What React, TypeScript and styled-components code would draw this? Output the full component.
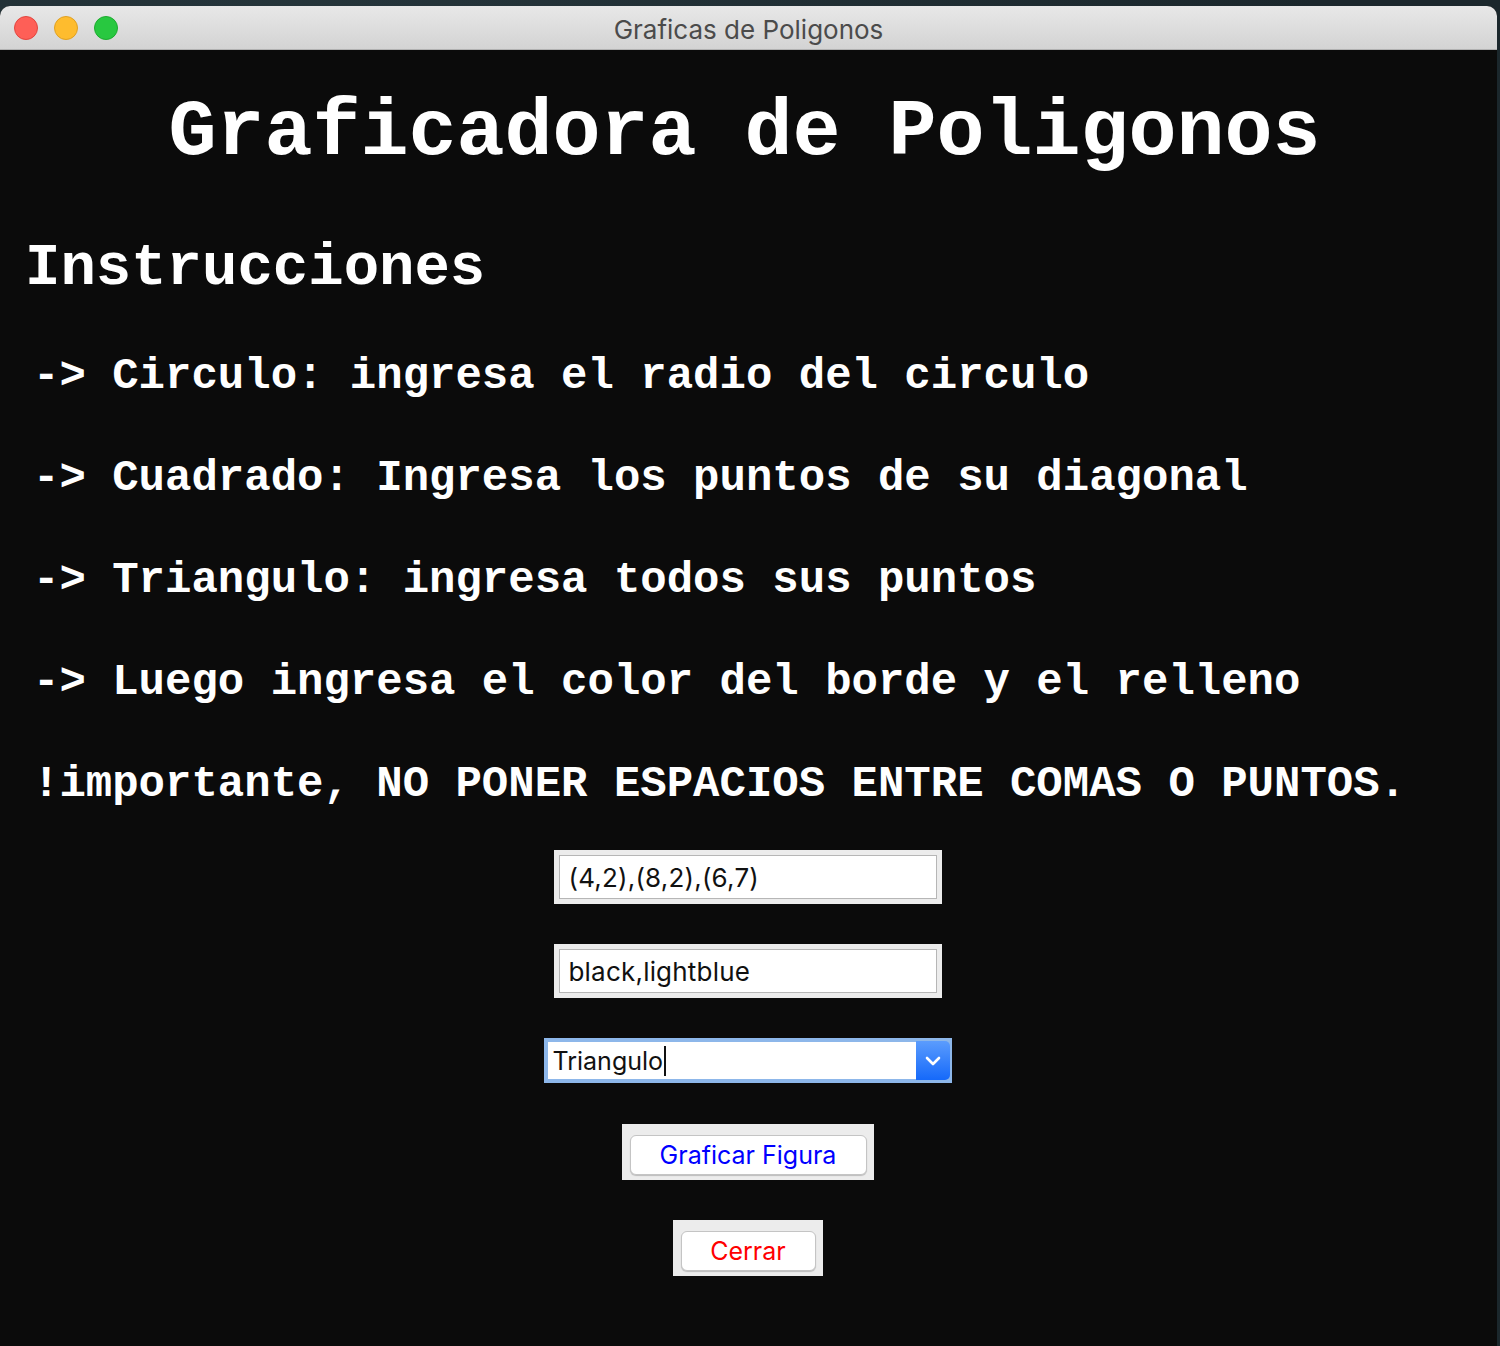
import React from "react";
import styled, { createGlobalStyle } from "styled-components";

const Global = createGlobalStyle`
  html, body { margin: 0; padding: 0; }
  body {
    background: #1d2a2f;
    width: 1500px;
    height: 1346px;
    overflow: hidden;
    font-family: "Liberation Sans", Arial, sans-serif;
  }
`;

const Desktop = styled.div`
  width: 1500px;
  height: 1346px;
  padding-top: 6px;
  box-sizing: border-box;
  background: radial-gradient(circle at 20% 10%, #26363c 0, #1b272c 60%);
`;

const Window = styled.div`
  width: 1497px;
  height: 1340px;
  border-radius: 10px 10px 0 0;
  overflow: hidden;
  background: #0b0b0b;
  display: flex;
  flex-direction: column;
`;

const TitleBar = styled.div`
  height: 43px;
  flex: none;
  background: linear-gradient(#e8e8e8, #d3d3d3);
  border-bottom: 1px solid #b1b1b1;
  display: grid;
  grid-template-columns: 1fr auto 1fr;
  align-items: center;
`;

const Lights = styled.div`
  display: flex;
  gap: 16px;
  padding-left: 14px;
`;

const Light = styled.span<{ $fill: string; $edge: string }>`
  width: 24px;
  height: 24px;
  border-radius: 50%;
  box-sizing: border-box;
  background: ${(p) => p.$fill};
  border: 1px solid ${(p) => p.$edge};
`;

const WinTitle = styled.div`
  font-family: Inter, "Noto Sans", sans-serif;
  font-size: 26px;
  color: #4b4b4b;
  padding-top: 3px;
`;

const Content = styled.div`
  flex: 1;
  display: flex;
  flex-direction: column;
  padding-top: 3px;
  color: #ffffff;
  font-family: "Liberation Mono", "Courier New", monospace;
  font-weight: bold;
`;

const Heading = styled.h1`
  margin: 0;
  height: 160px;
  line-height: 160px;
  font-size: 80px;
  font-weight: bold;
  text-align: center;
  padding-right: 8px;
`;

const SubHeading = styled.h2`
  margin: 0;
  height: 112px;
  line-height: 112px;
  font-size: 59px;
  font-weight: bold;
  padding-left: 25px;
`;

const Line = styled.p`
  margin: 0;
  height: 102px;
  line-height: 102px;
  font-size: 44px;
  padding-left: 33px;
  white-space: pre;
`;

const Form = styled.div`
  display: flex;
  flex-direction: column;
  align-items: center;
  padding-top: 15px;
  padding-right: 2px;
  font-weight: normal;
`;

const Frame = styled.div<{ $w: number; $mt: number }>`
  width: ${(p) => p.$w}px;
  margin-top: ${(p) => p.$mt}px;
  background: #ececec;
  box-sizing: border-box;
  padding: 5px;
`;

const Field = styled.div`
  height: 44px;
  background: #ffffff;
  border: 1px solid #b6b6b6;
  box-sizing: border-box;
  display: flex;
  align-items: center;
  padding-left: 9px;
  font-family: Inter, "Noto Sans", sans-serif;
  font-weight: normal;
  font-size: 26px;
  letter-spacing: 0.2px;
  color: #111;
`;

const Combo = styled.div`
  width: 408px;
  height: 45px;
  margin-top: 40px;
  box-sizing: border-box;
  border: 4px solid #8db7ea;
  background: #ffffff;
  display: flex;
`;

const ComboText = styled.div`
  flex: 1;
  display: flex;
  align-items: center;
  padding-left: 5px;
  font-family: Inter, "Noto Sans", sans-serif;
  font-weight: normal;
  font-size: 25px;
  color: #111;
`;

const Caret = styled.span`
  display: inline-block;
  width: 2px;
  height: 30px;
  background: #111;
  margin-left: 1px;
`;

const ComboButton = styled.div`
  width: 34px;
  margin: -1px -2px -1px 0;
  border-radius: 0 5px 5px 0;
  background: linear-gradient(#5b9cfd, #1569fa);
  display: flex;
  align-items: center;
  justify-content: center;
`;

const ButtonFrame = styled.div<{ $w: number; $mt: number }>`
  width: ${(p) => p.$w}px;
  height: 56px;
  margin-top: ${(p) => p.$mt}px;
  background: #ececec;
  box-sizing: border-box;
  padding: 11px 7px 5px 8px;
  display: flex;
`;

const Button = styled.button<{ $color: string }>`
  flex: 1;
  height: 40px;
  margin: 0;
  padding: 0;
  border: 1px solid #c4c4c4;
  border-radius: 6px;
  background: #ffffff;
  box-shadow: 0 1px 1px rgba(0, 0, 0, 0.2);
  font-family: Inter, "Noto Sans", sans-serif;
  font-weight: normal;
  font-size: 25px;
  color: ${(p) => p.$color};
  cursor: pointer;
`;

const lines = [
  "-> Circulo: ingresa el radio del circulo",
  "-> Cuadrado: Ingresa los puntos de su diagonal",
  "-> Triangulo: ingresa todos sus puntos",
  "-> Luego ingresa el color del borde y el relleno",
  "!importante, NO PONER ESPACIOS ENTRE COMAS O PUNTOS.",
];

export default function App() {
  return (
    <Desktop>
      <Global />
      <Window>
        <TitleBar>
          <Lights>
            <Light $fill="#fe5f57" $edge="#e2463f" />
            <Light $fill="#febc2e" $edge="#dfa023" />
            <Light $fill="#28c840" $edge="#1dab2f" />
          </Lights>
          <WinTitle>Graficas de Poligonos</WinTitle>
          <div />
        </TitleBar>
        <Content>
          <Heading>Graficadora de Poligonos</Heading>
          <SubHeading>Instrucciones</SubHeading>
          {lines.map((l) => (
            <Line key={l}>{l}</Line>
          ))}
          <Form>
            <Frame $w={388} $mt={0}>
              <Field>(4,2),(8,2),(6,7)</Field>
            </Frame>
            <Frame $w={388} $mt={40}>
              <Field>black,lightblue</Field>
            </Frame>
            <Combo>
              <ComboText>
                Triangulo
                <Caret />
              </ComboText>
              <ComboButton>
                <svg width="16" height="10" viewBox="0 0 16 10">
                  <path d="M2 2 L8 8 L14 2" fill="none" stroke="#fff" strokeWidth="2.6" strokeLinecap="round" strokeLinejoin="round" />
                </svg>
              </ComboButton>
            </Combo>
            <ButtonFrame $w={252} $mt={41}>
              <Button $color="#0000ff">Graficar Figura</Button>
            </ButtonFrame>
            <ButtonFrame $w={150} $mt={40}>
              <Button $color="#ff0000">Cerrar</Button>
            </ButtonFrame>
          </Form>
        </Content>
      </Window>
    </Desktop>
  );
}
